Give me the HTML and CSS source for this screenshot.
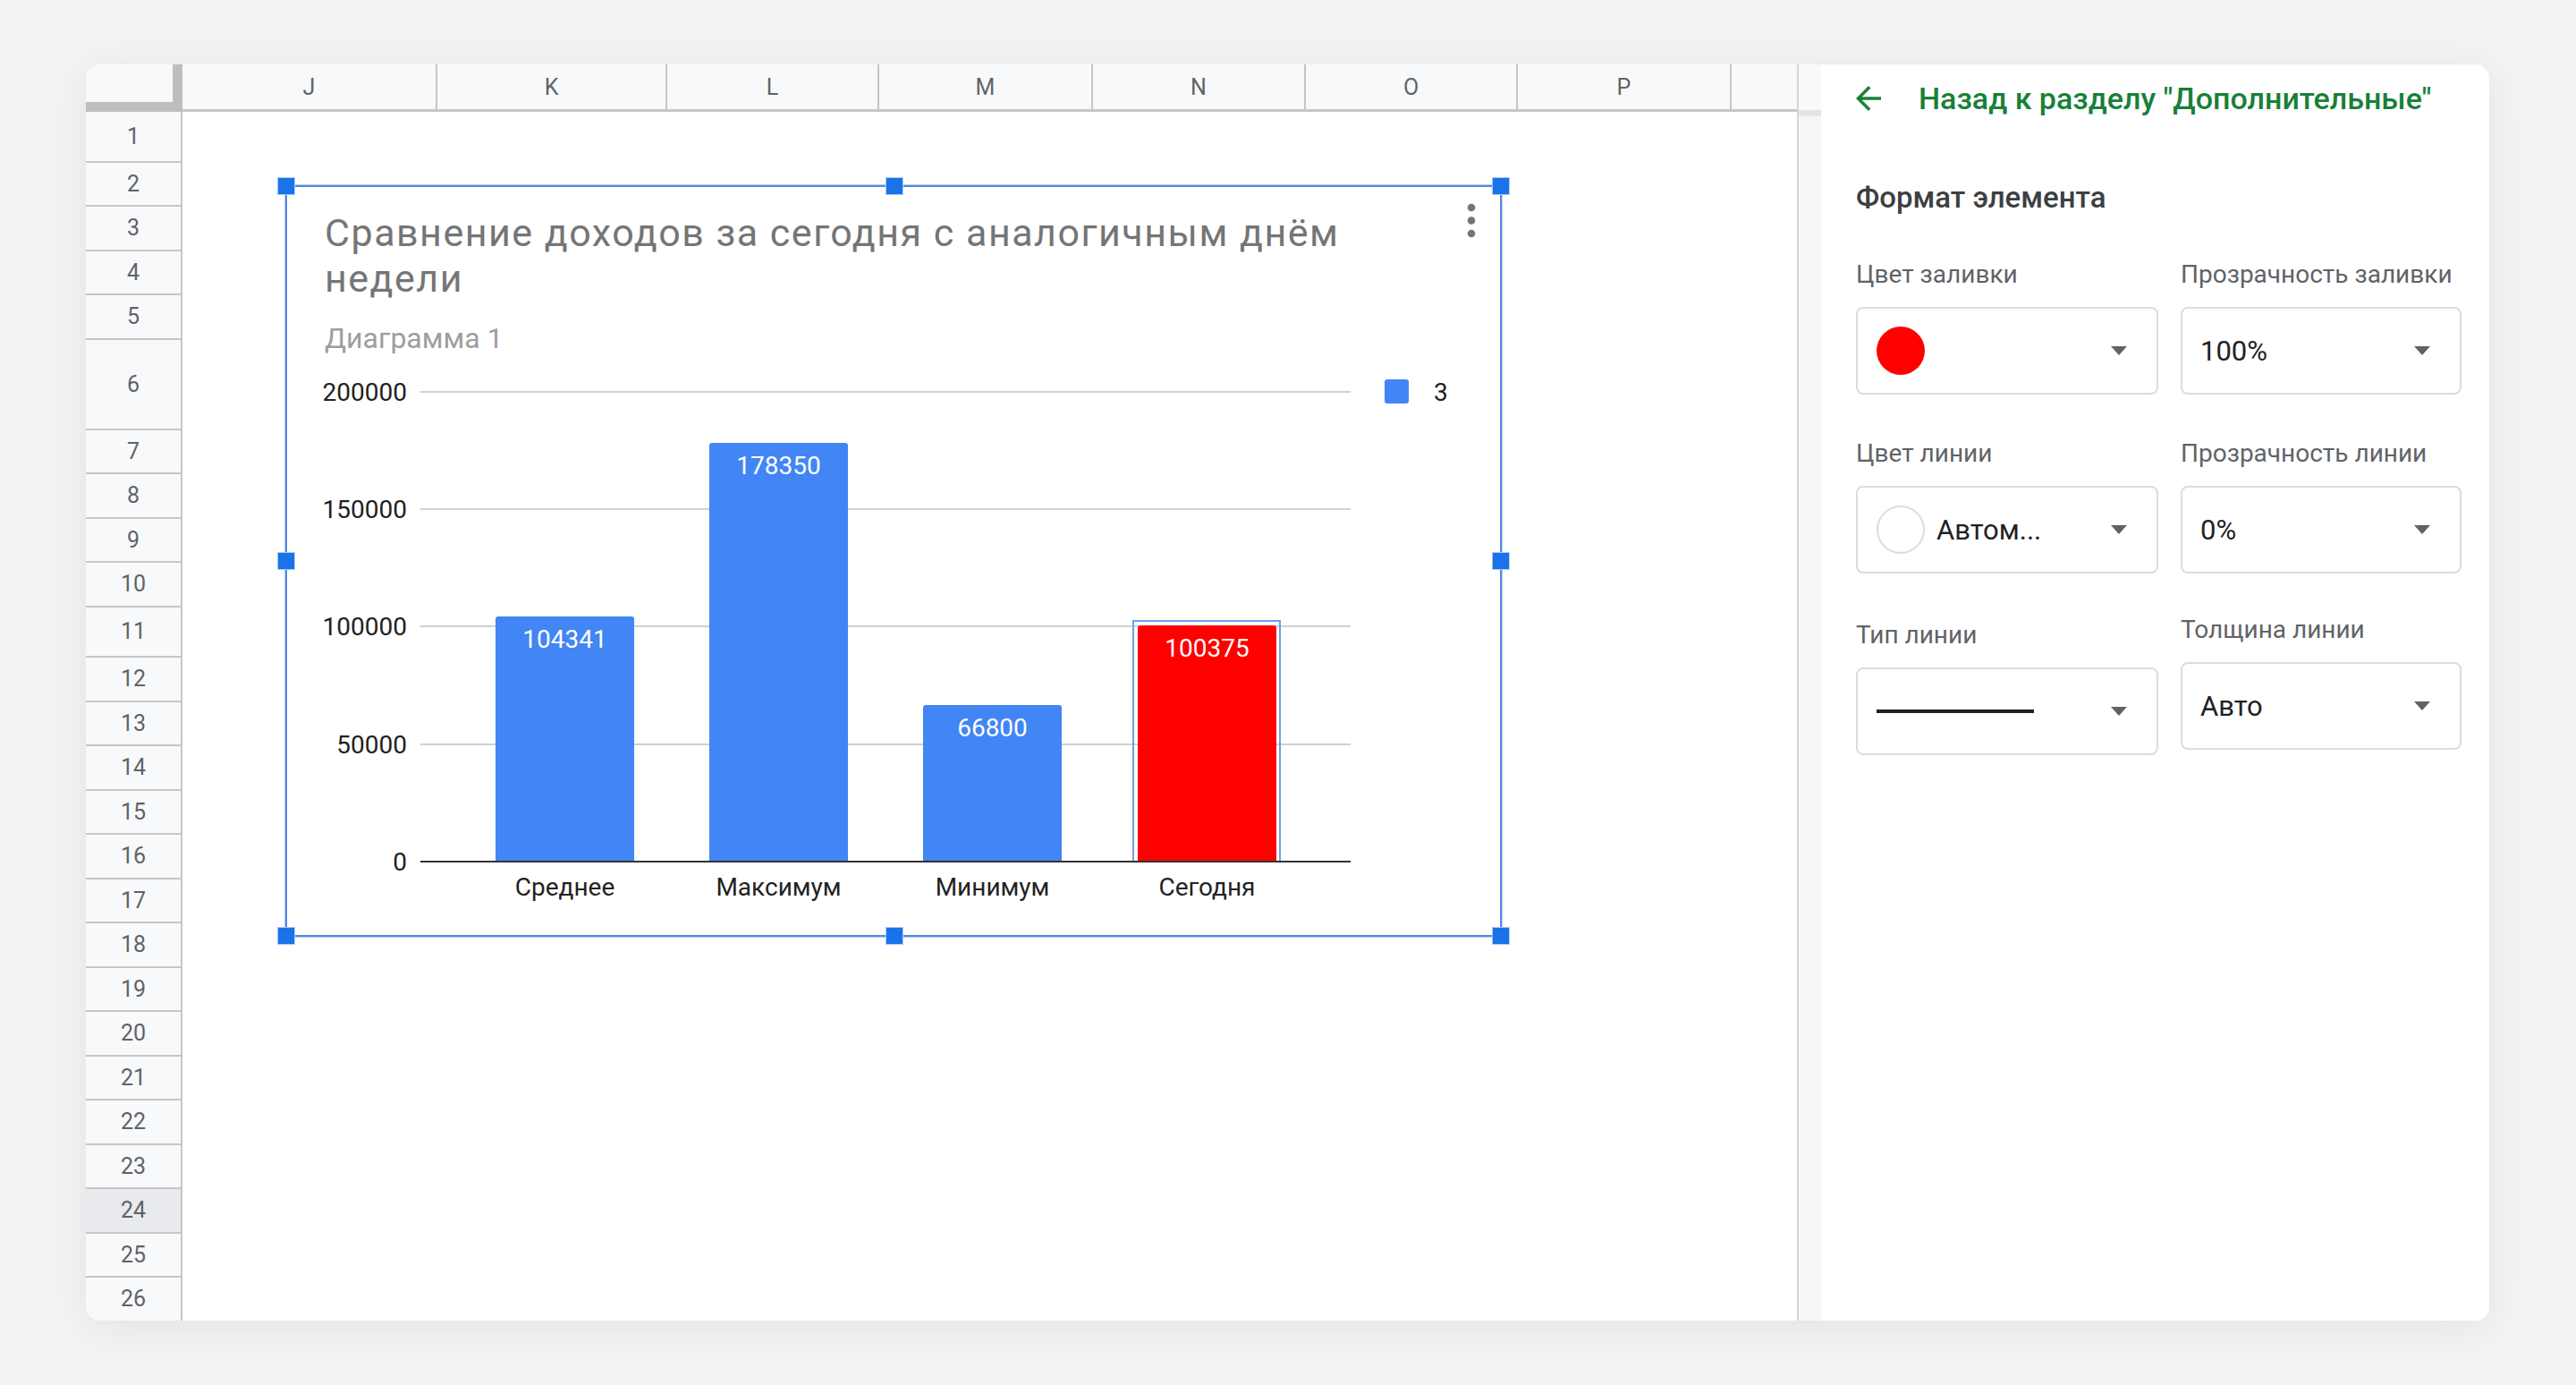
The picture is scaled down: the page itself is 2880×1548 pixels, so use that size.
FILE: index.html
```html
<!DOCTYPE html>
<html lang="ru">
<head>
<meta charset="utf-8">
<title>Формат элемента</title>
<link rel="stylesheet" href="styles.css">
</head>
<body>
<div class="stage">
  <div class="card">
    <section class="sheet">
      <div class="col-head">
        <div class="corner"></div>
        <div class="ch w-j">J</div>
        <div class="ch w-k">K</div>
        <div class="ch w-l">L</div>
        <div class="ch w-m">M</div>
        <div class="ch w-n">N</div>
        <div class="ch w-o">O</div>
        <div class="ch w-p">P</div>
        <div class="ch w-q"></div>
      </div>
      <div class="sheet-body">
        <div class="row-head">
          <div class="rh r-first">1</div>
          <div class="rh">2</div>
          <div class="rh">3</div>
          <div class="rh">4</div>
          <div class="rh">5</div>
          <div class="rh r-big">6</div>
          <div class="rh">7</div>
          <div class="rh">8</div>
          <div class="rh">9</div>
          <div class="rh">10</div>
          <div class="rh r-first">11</div>
          <div class="rh">12</div>
          <div class="rh">13</div>
          <div class="rh">14</div>
          <div class="rh">15</div>
          <div class="rh">16</div>
          <div class="rh">17</div>
          <div class="rh">18</div>
          <div class="rh">19</div>
          <div class="rh">20</div>
          <div class="rh">21</div>
          <div class="rh">22</div>
          <div class="rh">23</div>
          <div class="rh r-active">24</div>
          <div class="rh">25</div>
          <div class="rh">26</div>
        </div>
        <div class="cells">
          <div class="chart">
            <svg class="plot" width="1360" height="840" viewBox="0 0 1360 840" xmlns="http://www.w3.org/2000/svg">
              <g stroke="#d0d0d0" stroke-width="2">
                <line x1="151" y1="231" x2="1191" y2="231"/>
                <line x1="151" y1="362" x2="1191" y2="362"/>
                <line x1="151" y1="493" x2="1191" y2="493"/>
                <line x1="151" y1="625" x2="1191" y2="625"/>
              </g>
              <g class="axis" text-anchor="end">
                <text x="136" y="241">200000</text>
                <text x="136" y="372">150000</text>
                <text x="136" y="503">100000</text>
                <text x="136" y="635">50000</text>
                <text x="136" y="766">0</text>
              </g>
              <path d="M235 756 V485 Q235 482 238 482 H387 Q390 482 390 485 V756 Z" fill="#4285f4"/>
              <path d="M474 756 V291 Q474 288 477 288 H626 Q629 288 629 291 V756 Z" fill="#4285f4"/>
              <path d="M713 756 V584 Q713 581 716 581 H865 Q868 581 868 584 V756 Z" fill="#4285f4"/>
              <path d="M953 756 V495 Q953 492 956 492 H1105 Q1108 492 1108 495 V756 Z" fill="#ff0000"/>
              <rect x="948" y="487" width="164" height="269" fill="none" stroke="#6d9eeb" stroke-width="2"/>
              <line x1="151" y1="756" x2="1191" y2="756" stroke="#333333" stroke-width="2"/>
              <g class="val" text-anchor="middle">
                <text x="312.5" y="517">104341</text>
                <text x="551.5" y="323">178350</text>
                <text x="790.5" y="616">66800</text>
                <text x="1030.5" y="527">100375</text>
              </g>
              <g class="cat" text-anchor="middle">
                <text x="312.5" y="794">Среднее</text>
                <text x="551.5" y="794">Максимум</text>
                <text x="790.5" y="794">Минимум</text>
                <text x="1030.5" y="794">Сегодня</text>
              </g>
              <rect x="1229" y="217" width="27" height="27" rx="3" fill="#4285f4"/>
              <text class="cat" x="1284" y="241">3</text>
              <g fill="#757575">
                <circle cx="1326" cy="25" r="4.3"/>
                <circle cx="1326" cy="39.5" r="4.3"/>
                <circle cx="1326" cy="54" r="4.3"/>
              </g>
            </svg>
            <h1 class="chart-title">Сравнение доходов за сегодня с аналогичным днём<br>недели</h1>
            <p class="chart-sub">Диаграмма 1</p>
            <span class="handle h-tl"></span>
            <span class="handle h-tc"></span>
            <span class="handle h-tr"></span>
            <span class="handle h-ml"></span>
            <span class="handle h-mr"></span>
            <span class="handle h-bl"></span>
            <span class="handle h-bc"></span>
            <span class="handle h-br"></span>
          </div>
        </div>
      </div>
    </section>
    <div class="divider"></div>
    <aside class="panel">
      <div class="panel-head">
        <svg class="back" width="28" height="28" viewBox="4 4 16 16" xmlns="http://www.w3.org/2000/svg"><path d="M20 11H7.830l5.590-5.590L12 4l-8 8 8 8 1.410-1.410L7.830 13H20v-2z" fill="#188038"/></svg>
        <span class="back-text">Назад к разделу "Дополнительные"</span>
      </div>
      <h2 class="heading">Формат элемента</h2>
      <div class="fields">
        <div class="field">
          <div class="label">Цвет заливки</div>
          <div class="dropdown">
            <span class="swatch swatch-red"></span>
            <span class="caret"></span>
          </div>
        </div>
        <div class="field">
          <div class="label">Прозрачность заливки</div>
          <div class="dropdown">
            <span class="value">100%</span>
            <span class="caret"></span>
          </div>
        </div>
        <div class="field">
          <div class="label">Цвет линии</div>
          <div class="dropdown">
            <span class="swatch swatch-empty"></span>
            <span class="value value-near">Автом...</span>
            <span class="caret"></span>
          </div>
        </div>
        <div class="field">
          <div class="label">Прозрачность линии</div>
          <div class="dropdown">
            <span class="value">0%</span>
            <span class="caret"></span>
          </div>
        </div>
        <div class="field field-down">
          <div class="label">Тип линии</div>
          <div class="dropdown">
            <span class="line-sample"></span>
            <span class="caret"></span>
          </div>
        </div>
        <div class="field field-up">
          <div class="label">Толщина линии</div>
          <div class="dropdown">
            <span class="value">Авто</span>
            <span class="caret"></span>
          </div>
        </div>
      </div>
    </aside>
  </div>
</div>
</body>
</html>
```

FILE: styles.css
```css
* { box-sizing: border-box; }

html, body {
  margin: 0;
  padding: 0;
  background: #f3f3f3;
  font-family: Roboto, "Noto Sans", "Liberation Sans", sans-serif;
}

.stage {
  width: 2880px;
  height: 1548px;
  padding: 72px 97px 0 96px;
}

.card {
  display: flex;
  width: 2687px;
  height: 1404px;
  border-radius: 16px;
  overflow: hidden;
  background: #ffffff;
  box-shadow: 0 6px 48px rgba(0, 0, 0, 0.07);
}

/* ---------- sheet ---------- */
.sheet {
  width: 1915px;
  flex: none;
  display: flex;
  flex-direction: column;
  border-right: 2px solid #d6d6d6;
}

.col-head {
  display: flex;
  height: 53px;
  flex: none;
}

.corner {
  width: 108px;
  height: 53px;
  background: #f8f9fa;
  border-right: 11px solid #bebebe;
  border-bottom: 11px solid #bebebe;
}

.ch {
  height: 53px;
  background: #f8f9fa;
  border-right: 2px solid #c6c6c6;
  border-bottom: 3px solid #c6c6c6;
  display: flex;
  align-items: center;
  justify-content: center;
  font-size: 25px;
  color: #5f6368;
}

.w-j { width: 285px; }
.w-k { width: 257px; }
.w-l { width: 237px; }
.w-m { width: 239px; }
.w-n { width: 238px; }
.w-o { width: 237px; }
.w-p { width: 239px; }
.w-q { flex: 1; border-right: none; }

.sheet-body {
  flex: 1;
  display: flex;
  min-height: 0;
}

.row-head {
  width: 108px;
  flex: none;
  border-right: 2px solid #c6c6c6;
  background: #f8f9fa;
  display: flex;
  flex-direction: column;
}

.rh {
  flex: none;
  height: 49.5px;
  border-bottom: 2px solid #c6c6c6;
  display: flex;
  align-items: center;
  justify-content: center;
  font-size: 25px;
  color: #5f6368;
}

.rh.r-first { height: 56.5px; }
.rh.r-big { height: 101px; }
.rh.r-active { background: #e8eaed; }

.cells {
  flex: 1;
  position: relative;
  background: #ffffff;
}

/* ---------- chart ---------- */
.chart {
  position: absolute;
  left: 115px;
  top: 82px;
  width: 1360px;
  height: 840px;
  border: 2px solid #4a8af4;
  box-shadow: 0 0 0 1px #c9c9c9;
  background: #ffffff;
  padding: 26px 0 0 42px;
}

.plot {
  position: absolute;
  left: -2px;
  top: -2px;
  font-family: Roboto, "Liberation Sans", sans-serif;
}

.axis text,
.cat,
.cat text {
  font-size: 28px;
  fill: #222222;
}

.val text {
  font-size: 28px;
  fill: #ffffff;
}

.chart-title {
  position: relative;
  margin: 0;
  font-size: 43px;
  line-height: 51px;
  letter-spacing: 1.5px;
  font-weight: 400;
  color: #757575;
}

.chart-sub {
  position: relative;
  margin: 21px 0 0;
  font-size: 32px;
  line-height: 40px;
  color: #9e9e9e;
}

.handle {
  position: absolute;
  width: 20px;
  height: 20px;
  background: #1a73e8;
  border: 1px solid #aecbfa;
}

.h-tl { left: -11px; top: -11px; }
.h-tc { left: 669px; top: -11px; }
.h-tr { right: -11px; top: -11px; }
.h-ml { left: -11px; top: 408px; }
.h-mr { right: -11px; top: 408px; }
.h-bl { left: -11px; bottom: -11px; }
.h-bc { left: 669px; bottom: -11px; }
.h-br { right: -11px; bottom: -11px; }

/* ---------- divider ---------- */
.divider {
  width: 25px;
  flex: none;
  background: linear-gradient(#f8f9fa 0 51px, #e2e4e8 51px 58px, #f6f7f8 58px);
}

/* ---------- panel ---------- */
.panel {
  flex: 1;
  background: #ffffff;
  padding: 0 31px 0 39px;
}

.panel-head {
  height: 76px;
  display: flex;
  align-items: center;
  gap: 42px;
}

.back { flex: none; }

.back-text {
  font-size: 34px;
  font-weight: 500;
  color: #188038;
  white-space: nowrap;
}

.heading {
  margin: 53px 0 0;
  font-size: 33px;
  line-height: 40px;
  font-weight: 500;
  color: #3c4043;
}

.fields {
  margin-top: 50px;
  display: grid;
  grid-template-columns: 338px 314px;
  column-gap: 25px;
  row-gap: 50px;
}

.field-down { margin-top: 3px; }
.field-up { margin-top: -3px; }

.label {
  font-size: 28px;
  line-height: 32px;
  color: #5f6368;
  white-space: nowrap;
  margin-bottom: 20px;
}

.dropdown {
  height: 98px;
  border: 2px solid #dadce0;
  border-radius: 8px;
  display: flex;
  align-items: center;
  padding: 0 33px 0 20px;
}

.swatch {
  flex: none;
  width: 54px;
  height: 54px;
  border-radius: 50%;
  margin-left: 1px;
}

.swatch-red { background: #ff0000; }

.swatch-empty {
  background: #ffffff;
  border: 2px solid #dadce0;
}

.value {
  font-size: 31px;
  color: #202124;
}

.value-near { margin-left: 13px; }

.line-sample {
  width: 176px;
  height: 4px;
  background: #202124;
  margin-left: 1px;
}

.caret {
  margin-left: auto;
  width: 0;
  height: 0;
  border-left: 9.5px solid transparent;
  border-right: 9.5px solid transparent;
  border-top: 10px solid #5f6368;
}
```
